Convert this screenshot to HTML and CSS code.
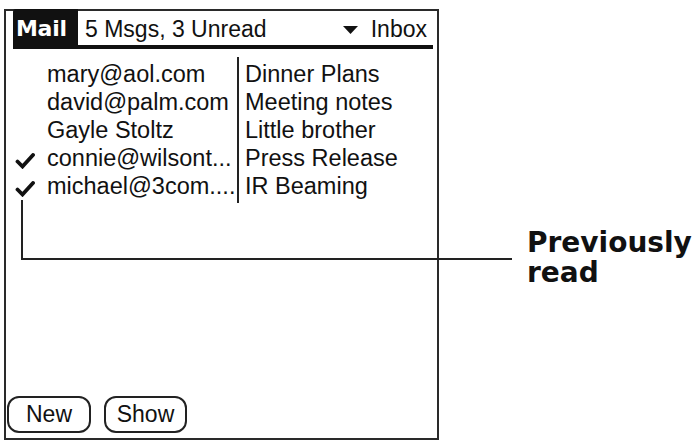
FILE: index.html
```html
<!DOCTYPE html>
<html>
<head>
<meta charset="utf-8">
<link rel="stylesheet" href="styles.css">
</head>
<body>
<div class="page">
  <div class="screen">
    <div class="titlebar">
      <div class="tab">Mail</div>
      <div class="title">5 Msgs, 3 Unread</div>
      <div class="category">
        <svg class="tri" width="15" height="8" viewBox="0 0 15 8"><polygon points="0,0 15,0 7.5,8" fill="#111"/></svg>
        <span>Inbox</span>
      </div>
    </div>
    <div class="list">
      <div class="col checks">
        <div class="row"></div>
        <div class="row"></div>
        <div class="row"></div>
        <div class="row check-row"><svg class="check" width="20" height="16" viewBox="0 0 20 16"><path d="M2.5 8.5 L7.5 13.5 L18 2" fill="none" stroke="#111" stroke-width="3.8" stroke-linejoin="miter" stroke-linecap="round"/></svg></div>
        <div class="row check-row"><svg class="check" width="20" height="16" viewBox="0 0 20 16"><path d="M2.5 8.5 L7.5 13.5 L18 2" fill="none" stroke="#111" stroke-width="3.8" stroke-linejoin="miter" stroke-linecap="round"/></svg></div>
      </div>
      <div class="col from">
        <div class="row">mary@aol.com</div>
        <div class="row">david@palm.com</div>
        <div class="row">Gayle Stoltz</div>
        <div class="row">connie@wilsont...</div>
        <div class="row">michael@3com....</div>
      </div>
      <div class="col subj">
        <div class="row">Dinner Plans</div>
        <div class="row">Meeting notes</div>
        <div class="row">Little brother</div>
        <div class="row">Press Release</div>
        <div class="row">IR Beaming</div>
      </div>
    </div>
    <div class="buttons">
      <div class="btn btn-new">New</div>
      <div class="btn btn-show">Show</div>
    </div>
  </div>
  <div class="callout">Previously<br>read</div>
  <div class="pointer"></div>
</div>
</body>
</html>
```
FILE: styles.css
```css
html, body {
  margin: 0;
  padding: 0;
  background: #fff;
}
.page {
  position: relative;
  width: 698px;
  height: 443px;
  display: flex;
  align-items: flex-start;
  font-family: "Liberation Sans", Arial, sans-serif;
  color: #111;
  overflow: hidden;
}
.screen {
  box-sizing: border-box;
  margin-left: 4px;
  margin-top: 9px;
  width: 435px;
  height: 431px;
  border: 2px solid #2a2a2a;
  display: flex;
  flex-direction: column;
  flex: none;
}
.titlebar {
  margin: -2px 4px 0 7px;
  height: 36px;
  border-bottom: 4px solid #111;
  display: flex;
  align-items: flex-start;
  font-size: 23px;
}
.tab {
  box-sizing: border-box;
  width: 65px;
  height: 36px;
  background: #111;
  color: #fff;
  font-family: "DejaVu Sans", sans-serif;
  font-weight: bold;
  font-size: 22px;
  padding: 4px 0 0 3px;
  line-height: 32px;
  border-radius: 3px 0 0 0;
  letter-spacing: -0.3px;
}
.title {
  margin-left: 7px;
  padding-top: 4px;
  line-height: 32px;
}
.category {
  margin-left: auto;
  padding: 4px 6px 0 0;
  line-height: 32px;
  display: flex;
  align-items: center;
}
.tri {
  display: block;
  margin-right: 13px;
  margin-top: 1px;
}
.list {
  display: flex;
  align-items: flex-start;
  margin-top: 8px;
  font-size: 23.5px;
}
.col {
  padding-top: 3px;
}
.row {
  box-sizing: border-box;
  height: 28px;
  line-height: 28px;
  white-space: nowrap;
}
.checks {
  width: 41px;
}
.check-row {
  padding: 9px 0 0 9px;
}
.check {
  display: block;
}
.from {
  width: 190px;
}
.subj {
  border-left: 2px solid #222;
  padding-left: 6px;
  padding-bottom: 3px;
}
.buttons {
  margin-top: auto;
  display: flex;
  gap: 13px;
  padding: 0 0 5px 1px;
}
.btn {
  box-sizing: border-box;
  height: 37px;
  border: 2px solid #222;
  border-radius: 12px;
  font-size: 23px;
  line-height: 33px;
  text-align: center;
}
.btn-new {
  width: 84px;
}
.btn-show {
  width: 83px;
}
.callout {
  margin-left: 88px;
  margin-top: 228px;
  font-family: "DejaVu Sans", sans-serif;
  font-weight: bold;
  font-size: 28px;
  line-height: 30px;
  color: #111;
  white-space: nowrap;
}
.pointer {
  position: absolute;
  left: 21px;
  top: 200px;
  width: 489px;
  height: 58px;
  border-left: 2px solid #222;
  border-bottom: 2px solid #222;
}
```
